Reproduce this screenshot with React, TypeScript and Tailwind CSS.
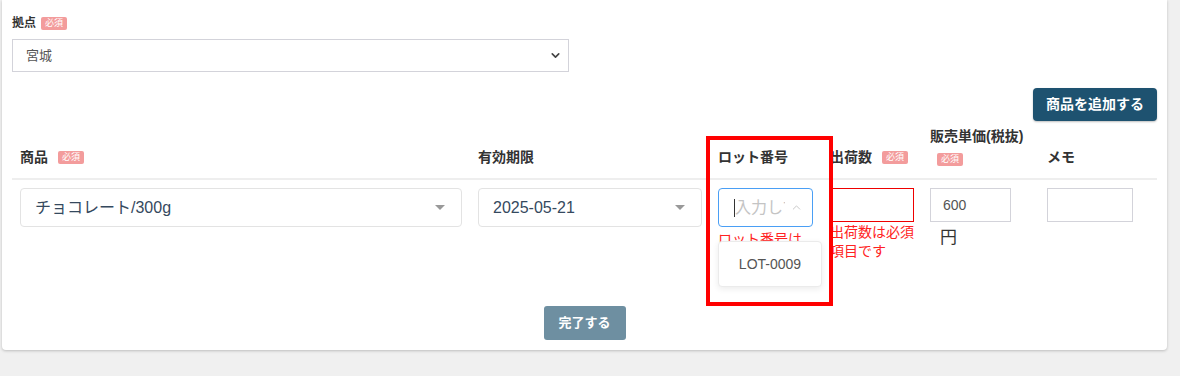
import { ChevronDown, ChevronUp } from "lucide-react";

function Badge() {
  return (
    <span className="inline-flex h-[13px] w-[26px] items-center justify-center rounded-[2px] bg-[#f39c9c] text-[9px] font-normal leading-none text-white">
      必須
    </span>
  );
}

function Caret() {
  return (
    <span className="h-0 w-0 border-x-[5px] border-t-[5px] border-x-transparent border-t-[#999]" />
  );
}

export default function App() {
  return (
    <div className="relative h-[376px] w-[1180px] bg-[#f0f0f0] font-['Liberation_Sans','Noto_Sans_CJK_JP',sans-serif] text-[#333]">
      <div className="ml-[2px] w-[1165px] rounded-b bg-white px-[10px] pb-[10px] pt-[16px] shadow-[0_1px_3px_rgba(0,0,0,0.22)]">
        <div className="flex h-[14px] items-center gap-[5px]">
          <span className="text-[12px] font-bold">拠点</span>
          <Badge />
        </div>
        <div className="mt-[9px] flex h-[33px] w-[557px] items-center justify-between border border-[#d3d3da] pl-[13px] pr-[6px] text-[13px] text-[#555]">
          <span>宮城</span>
          <ChevronDown size={13} strokeWidth={3} className="text-[#444]" />
        </div>

        <div className="mt-[16px] flex justify-end">
          <button
            type="button"
            className="h-[33px] w-[124px] rounded bg-[#1e5270] text-[14px] font-bold text-white shadow-[0_1px_2px_rgba(0,0,0,0.25)]"
          >
            商品を追加する
          </button>
        </div>

        <div className="grid h-[59px] grid-cols-[458px_240px_112px_100px_117px_118px] items-end border-b-2 border-[#eee] pb-[10px] text-[14px] font-bold">
          <div className="flex items-center gap-[10px] px-2">
            <span>商品</span>
            <Badge />
          </div>
          <div className="px-2">有効期限</div>
          <div className="px-2">ロット番号</div>
          <div className="flex items-center gap-[10px] px-2">
            <span>出荷数</span>
            <Badge />
          </div>
          <div className="flex flex-col gap-[2px] px-2">
            <span className="leading-[18px]">販売単価(税抜)</span>
            <span className="pl-[7px]">
              <Badge />
            </span>
          </div>
          <div className="px-2">メモ</div>
        </div>

        <div className="grid h-[126px] grid-cols-[458px_240px_112px_100px_117px_118px] items-start pt-2">
          <div className="px-2">
            <div className="flex h-[39px] items-center justify-between rounded border border-[#e3e3e3] pl-[14px] pr-[16px] text-[16px] text-[#35495e]">
              <span>チョコレート/300g</span>
              <Caret />
            </div>
          </div>
          <div className="px-2">
            <div className="flex h-[39px] items-center justify-between rounded border border-[#e3e3e3] pl-[14px] pr-[16px] text-[16px] text-[#35495e]">
              <span>2025-05-21</span>
              <Caret />
            </div>
          </div>
          <div className="relative px-2">
            <div className="flex h-[39px] w-[95px] items-center rounded border border-[#4a9ff5] pl-[15px] pr-[9px] text-[16px] text-[#c4c4c4]">
              <span className="h-[18px] w-px bg-[#333]" />
              <span className="w-[50px] overflow-hidden whitespace-nowrap">入力して</span>
              <ChevronUp size={13} strokeWidth={1.5} className="ml-auto text-[#bbb]" />
            </div>
            <p className="mt-[3px] text-[14px] leading-[19px] text-[#f22]">ロット番号は必須項目です</p>
            <div className="absolute left-2 top-[53px] flex h-[46px] w-[104px] items-center justify-center rounded border border-[#ebebeb] bg-white text-[14px] text-[#555] shadow-[0_2px_6px_rgba(0,0,0,0.08)]">
              LOT-0009
            </div>
          </div>
          <div className="px-2">
            <div className="h-[34px] w-[84px] border border-[#e00]" />
            <p className="mt-[1px] text-[14px] leading-[19px] text-[#f22]">出荷数は必須項目です</p>
          </div>
          <div className="px-2">
            <div className="flex h-[34px] w-[81px] items-center border border-[#d3d3da] pl-[12px] text-[14px] text-[#555]">
              600
            </div>
            <p className="mt-[6px] pl-[10px] text-[17px] leading-[20px] text-[#333]">円</p>
          </div>
          <div className="px-2">
            <div className="h-[34px] w-[86px] border border-[#d3d3da]" />
          </div>
        </div>

        <div className="flex justify-center">
          <button
            type="button"
            className="h-[34px] w-[82px] rounded-[3px] bg-[#6e8fa1] text-[13px] font-bold text-white"
          >
            完了する
          </button>
        </div>
      </div>

      <div className="pointer-events-none absolute left-[706px] top-[136px] h-[170px] w-[127px] border-4 border-[#ff0000]" />
    </div>
  );
}
